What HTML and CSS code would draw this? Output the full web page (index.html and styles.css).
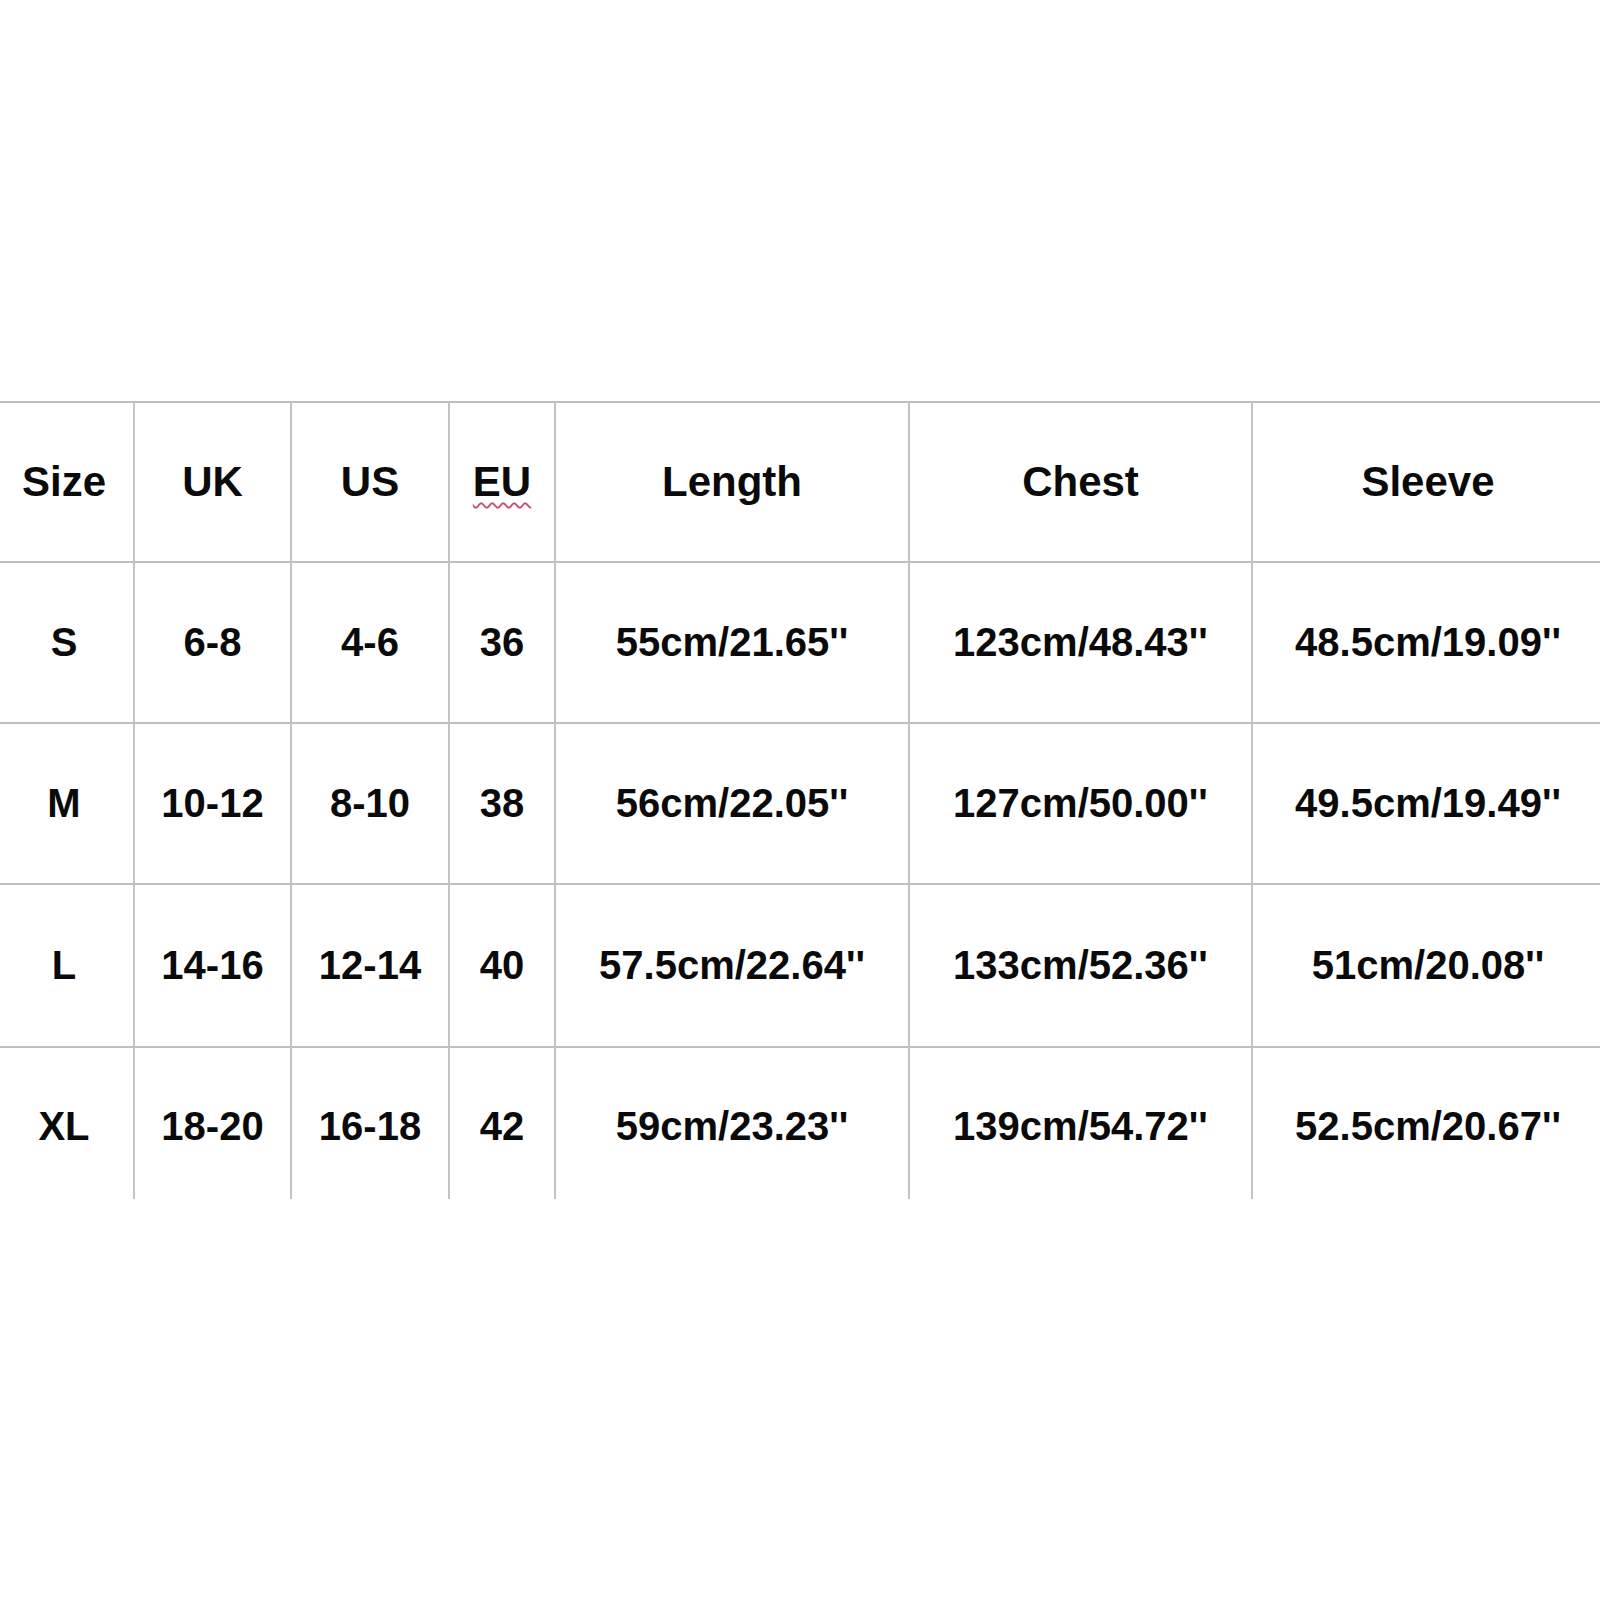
FILE: index.html
```html
<!DOCTYPE html>
<html>
<head>
<meta charset="utf-8">
<link rel="stylesheet" href="styles.css">
</head>
<body>
<div class="chart">
  <div class="cell head first">Size</div>
  <div class="cell head">UK</div>
  <div class="cell head">US</div>
  <div class="cell head"><span class="spell">EU</span></div>
  <div class="cell head">Length</div>
  <div class="cell head">Chest</div>
  <div class="cell head">Sleeve</div>

  <div class="cell first">S</div>
  <div class="cell">6-8</div>
  <div class="cell">4-6</div>
  <div class="cell">36</div>
  <div class="cell">55cm/21.65''</div>
  <div class="cell">123cm/48.43''</div>
  <div class="cell">48.5cm/19.09''</div>

  <div class="cell first">M</div>
  <div class="cell">10-12</div>
  <div class="cell">8-10</div>
  <div class="cell">38</div>
  <div class="cell">56cm/22.05''</div>
  <div class="cell">127cm/50.00''</div>
  <div class="cell">49.5cm/19.49''</div>

  <div class="cell first">L</div>
  <div class="cell">14-16</div>
  <div class="cell">12-14</div>
  <div class="cell">40</div>
  <div class="cell">57.5cm/22.64''</div>
  <div class="cell">133cm/52.36''</div>
  <div class="cell">51cm/20.08''</div>

  <div class="cell last first">XL</div>
  <div class="cell last">18-20</div>
  <div class="cell last">16-18</div>
  <div class="cell last">42</div>
  <div class="cell last">59cm/23.23''</div>
  <div class="cell last">139cm/54.72''</div>
  <div class="cell last">52.5cm/20.67''</div>
</div>
</body>
</html>
```

FILE: styles.css
```css
html, body {
  margin: 0;
  padding: 0;
  background: #ffffff;
}

body {
  overflow: hidden;
  font-family: "Liberation Sans", Arial, sans-serif;
}

.chart {
  margin-top: 401px;
  margin-left: -5px;
  width: 1608px;
  display: grid;
  grid-template-columns: 138px 157px 158px 106px 354px 343px 352px;
  grid-template-rows: 160px 161px 161px 163px 153px;
}

.cell {
  box-sizing: border-box;
  border-top: 2px solid #bfbfbf;
  border-left: 2px solid #c4c4c4;
  display: flex;
  align-items: center;
  justify-content: center;
  font-size: 40px;
  font-weight: bold;
  color: #0a0a0a;
  white-space: nowrap;
}

.cell.head {
  font-size: 42px;
}

.cell.last {
  padding-top: 6px;
}

.cell.first {
  border-left: none;
}

.spell {
  text-decoration: underline wavy #c8506e;
  text-decoration-thickness: 1.5px;
  text-underline-offset: 6px;
}
```
